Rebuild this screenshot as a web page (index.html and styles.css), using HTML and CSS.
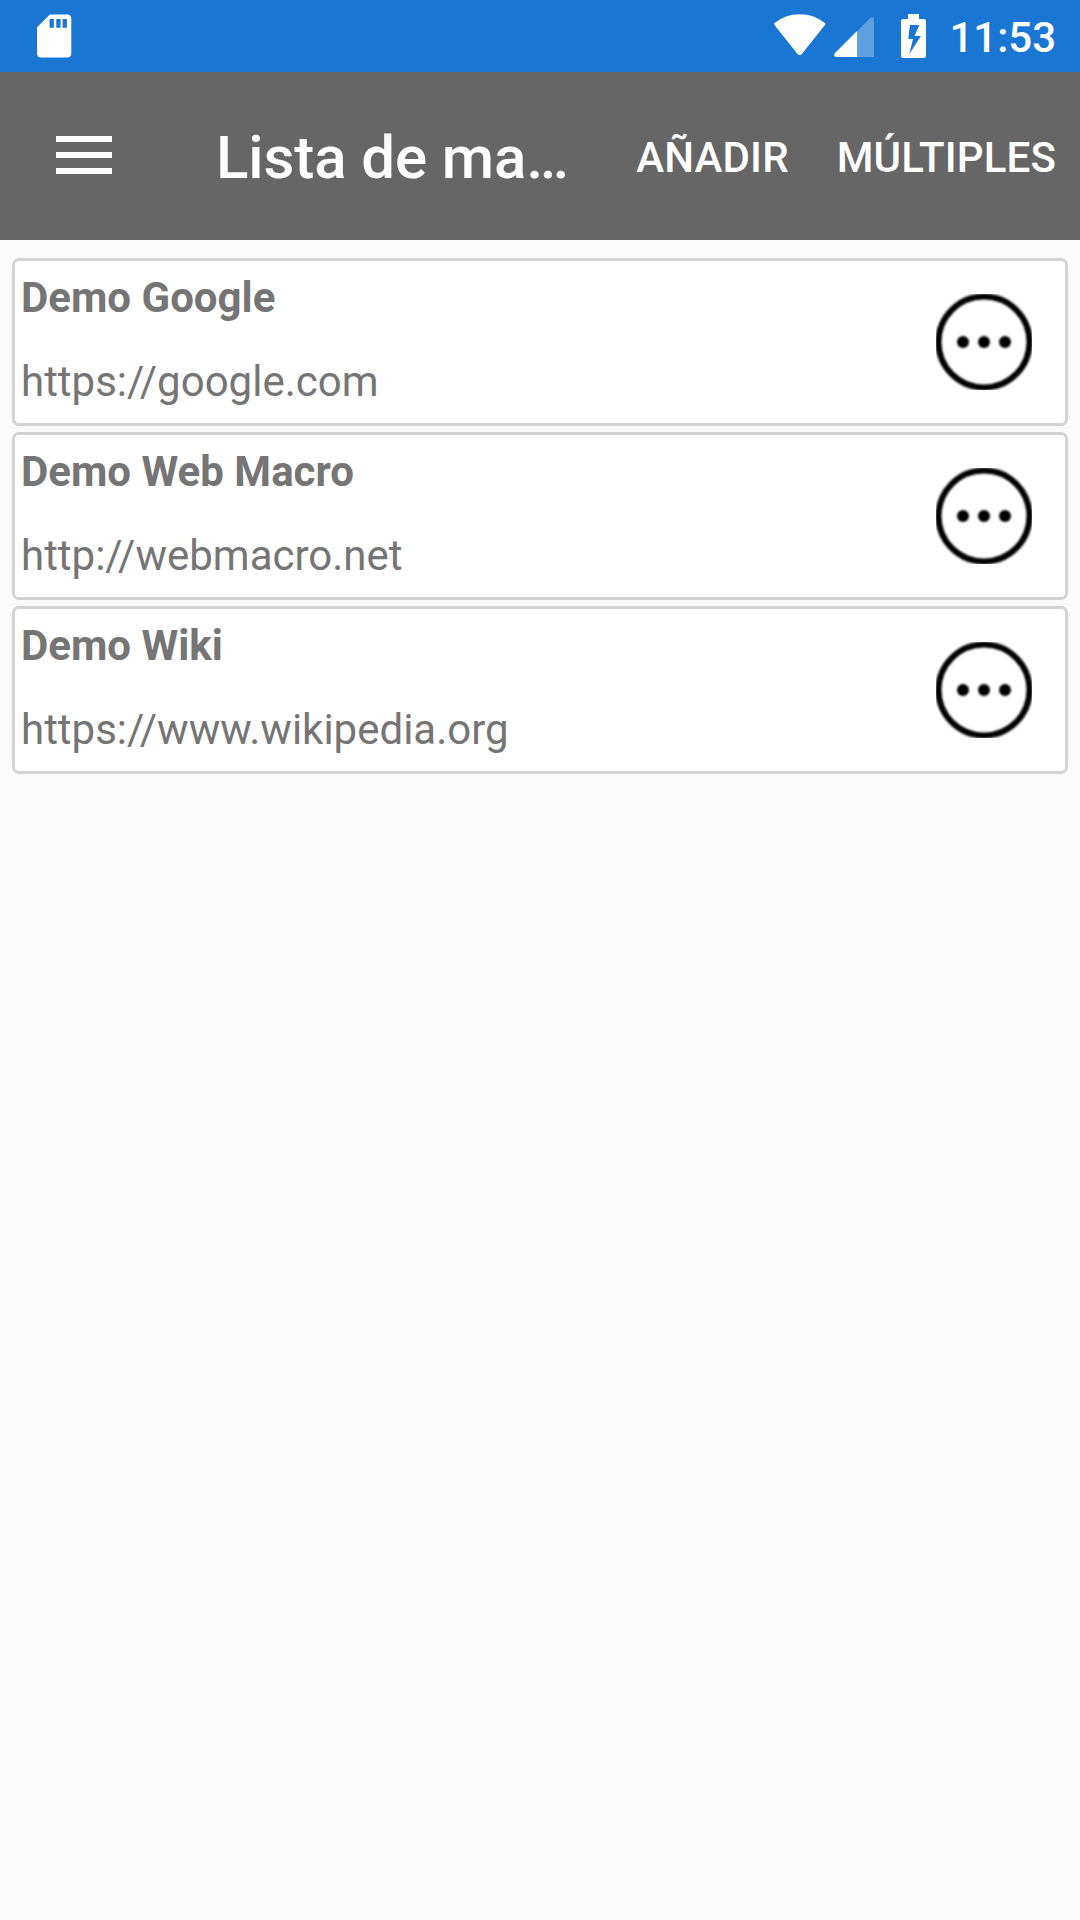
FILE: index.html
```html
<!DOCTYPE html>
<html lang="es">
<head>
  <meta charset="UTF-8">
  <title>Lista de macros</title>
  <link rel="stylesheet" href="styles.css">
</head>
<body>

  <div class="status-bar">
    <svg class="sd-card" width="36" height="44" viewBox="0 0 36 44">
      <path fill="#fff" fill-rule="evenodd" d="M13.8 .4H31q4.3 0 4.3 4.3V39.300q0 4.300-4.300 4.300H5.300Q1 43.600 1 39.300V13.200ZM13.600 5v8.700h4.300V5ZM20.300 5v8.700h4.300V5ZM26.600 5v8.700h4.300V5Z"/>
    </svg>
    <div class="status-icons">
      <svg class="wifi" width="52" height="44" viewBox="0 0 52 44">
        <path fill="#fff" d="M.2 9.300Q11 .3 25.700.3T51.200 9.300Q51.400 10.500 50.500 11.600L27.700 40.200Q25.700 42 23.700 40.200L.9 11.600Q0 10.500 .2 9.300Z"/>
      </svg>
      <svg class="signal" width="40" height="44" viewBox="0 0 40 44">
        <path fill="#fff" fill-opacity=".3" d="M23 17.200 36.500 3.700Q40 1.500 40 5.500V43H23Z"/>
        <path fill="#fff" d="M23 17V43H1.800Q-.8 42 .6 39.400Z"/>
      </svg>
      <svg class="battery" width="25" height="44" viewBox="0 0 25 44">
        <path fill="#fff" fill-rule="evenodd" d="M7 0H18V5H23Q25 5 25 7V42Q25 44 23 44H2Q0 44 0 42V7Q0 5 2 5H7ZM9 11 7.200 25H12L8.300 40 20 22H13.600L18.300 11Z"/>
      </svg>
      <span class="clock">11:53</span>
    </div>
  </div>

  <div class="toolbar">
    <svg class="menu" width="56" height="38" viewBox="0 0 56 38">
      <path fill="#fff" d="M0 0h56v6H0zM0 16h56v6H0zM0 32h56v6H0z"/>
    </svg>
    <h1>Lista de ma…</h1>
    <div class="actions">
      <span>AÑADIR</span>
      <span>MÚLTIPLES</span>
    </div>
  </div>

  <div class="macro-list">
    <div class="macro">
      <div class="macro-text">
        <div class="name">Demo Google</div>
        <div class="url">https://google.com</div>
      </div>
      <svg class="more" width="96" height="96" viewBox="0 0 96 96">
        <g>
          <circle cx="48" cy="48" r="45.500" fill="none" stroke="#000" stroke-width="6"/>
          <circle cx="27" cy="48" r="6"/>
          <circle cx="48" cy="48" r="6"/>
          <circle cx="69" cy="48" r="6"/>
        </g>
      </svg>
    </div>
    <div class="macro">
      <div class="macro-text">
        <div class="name">Demo Web Macro</div>
        <div class="url">http://webmacro.net</div>
      </div>
      <svg class="more" width="96" height="96" viewBox="0 0 96 96">
        <g>
          <circle cx="48" cy="48" r="45.500" fill="none" stroke="#000" stroke-width="6"/>
          <circle cx="27" cy="48" r="6"/>
          <circle cx="48" cy="48" r="6"/>
          <circle cx="69" cy="48" r="6"/>
        </g>
      </svg>
    </div>
    <div class="macro">
      <div class="macro-text">
        <div class="name">Demo Wiki</div>
        <div class="url">https://www.wikipedia.org</div>
      </div>
      <svg class="more" width="96" height="96" viewBox="0 0 96 96">
        <g>
          <circle cx="48" cy="48" r="45.500" fill="none" stroke="#000" stroke-width="6"/>
          <circle cx="27" cy="48" r="6"/>
          <circle cx="48" cy="48" r="6"/>
          <circle cx="69" cy="48" r="6"/>
        </g>
      </svg>
    </div>
  </div>

</body>
</html>
```

FILE: styles.css
```css
* {
  margin: 0;
  padding: 0;
  box-sizing: border-box;
}
body {
  font-family: Roboto, sans-serif;
  font-size: 42px;
  line-height: 50px;
  background: #fafafa;
  min-height: 100vh;
}
svg {
  display: block;
  flex: none;
}
.status-bar {
  display: flex;
  justify-content: space-between;
  height: 72px;
  padding: 0 24px 0 36px;
  background: #1976d2;
  color: #fff;
}
.sd-card {
  margin-top: 14px;
}
.status-icons {
  display: flex;
  padding-top: 14px;
}
.signal {
  margin-left: 8px;
}
.battery {
  margin-left: 27px;
}
.clock {
  margin: -1px 0 0 23px;
  font-weight: 500;
}
.toolbar {
  display: flex;
  align-items: center;
  height: 168px;
  padding: 0 24px 0 56px;
  background: #666;
  color: #fff;
}
.menu {
  margin-bottom: 2px;
}
h1 {
  margin-left: 104px;
  padding-top: 4px;
  font-size: 60px;
  line-height: 70px;
  font-weight: 500;
  letter-spacing: -0.1px;
  white-space: nowrap;
}
.actions {
  display: flex;
  gap: 48px;
  margin-left: auto;
  padding-top: 4px;
  font-weight: 500;
  letter-spacing: 0.15px;
}
.macro-list {
  display: flex;
  flex-direction: column;
  gap: 6px;
  padding: 18px 12px;
}
.macro {
  display: flex;
  align-items: center;
  justify-content: space-between;
  height: 168px;
  padding: 0 33px 0 6px;
  background: #fff;
  border: 3px solid #d3d3d3;
  border-radius: 7px;
  color: #757575;
}
.macro-text {
  display: flex;
  flex-direction: column;
  gap: 34px;
  padding-bottom: 4px;
}
.name {
  font-weight: bold;
}
.more g {
  filter: blur(0.8px);
}
```
